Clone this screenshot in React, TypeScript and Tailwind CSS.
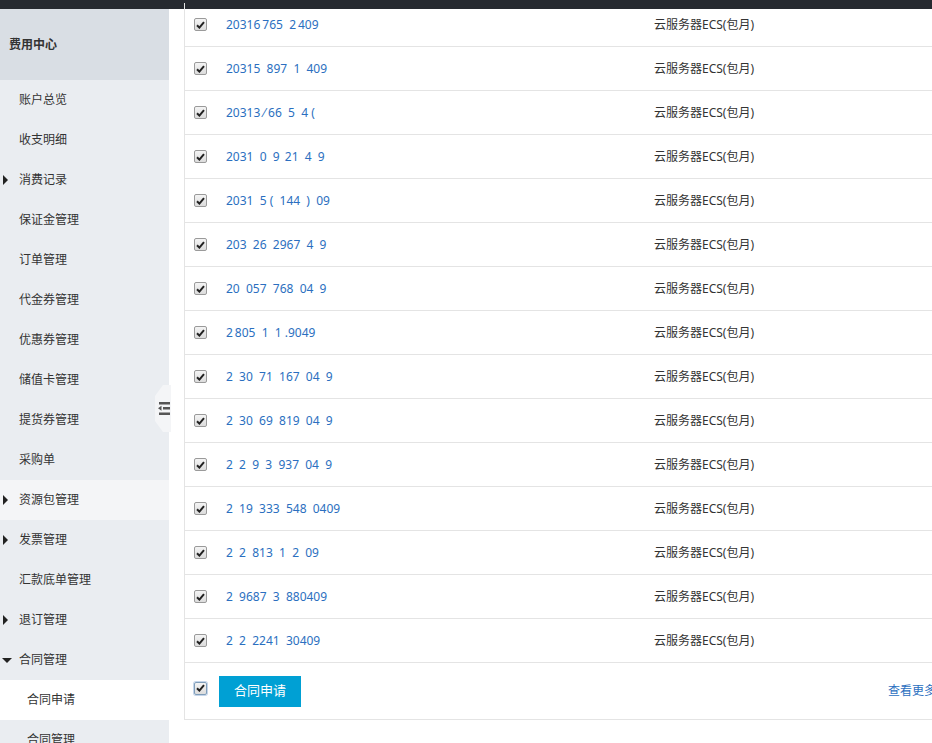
import React from "react";

const menu: { label: string; arrow?: "right" | "down"; active?: boolean; hover?: boolean; sub?: boolean }[] = [
  { label: "账户总览" },
  { label: "收支明细" },
  { label: "消费记录", arrow: "right" },
  { label: "保证金管理" },
  { label: "订单管理" },
  { label: "代金券管理" },
  { label: "优惠券管理" },
  { label: "储值卡管理" },
  { label: "提货券管理" },
  { label: "采购单" },
  { label: "资源包管理", arrow: "right", hover: true },
  { label: "发票管理", arrow: "right" },
  { label: "汇款底单管理" },
  { label: "退订管理", arrow: "right" },
  { label: "合同管理", arrow: "down" },
  { label: "合同申请", sub: true, active: true },
  { label: "合同管理", sub: true },
];

// order ids are partly masked in the source, keep gaps as spaces
const orders = [
  "20316\u2009765  2\u2009409",
  "20315  897  1  409",
  "20313 \u2044 66  5  4 (",
  "2031  0  9\u2009 21  4  9",
  "2031  5 (  144  )  09",
  "203  26  2967  4  9",
  "20  057  768  04  9",
  "2\u2009805  1  1 .9049",
  "2  30  71  167  04  9",
  "2  30  69  819  04  9",
  "2  2  9  3  937  04  9",
  "2  19  333  548  0409",
  "2  2  813  1  2  09",
  "2  9687  3  880409",
  "2  2  2241  30409",
];

const Check = ({ focus }: { focus?: boolean }) => (
  <span
    className={`flex h-[13px] w-[13px] items-center justify-center rounded-[2px] border bg-gradient-to-b from-[#f4f4f4] to-[#dcdcdc] ${
      focus ? "border-[#7f9db9] ring-1 ring-[#c5d5ea]" : "border-[#9a9a9a]"
    }`}
  >
    <svg width="9" height="8" viewBox="0 0 9 8">
      <path d="M1 4.2 L3.4 6.6 L8 1.2" fill="none" stroke="#222" strokeWidth="2" />
    </svg>
  </span>
);

export default function App() {
  return (
    <div
      className="h-[743px] w-[932px] overflow-hidden bg-white text-[12px] text-[#333]"
      style={{ fontFamily: '"Noto Sans", "Noto Sans CJK SC", sans-serif' }}
    >
      <div className="h-[9px] bg-[#262a30]" />
      <div className="relative flex">
        {/* sidebar */}
        <aside className="w-[169px] shrink-0 bg-[#eaedf1]">
          <div className="flex h-[71px] items-center bg-[#d9dee4] pl-[9px] font-bold text-[#333]">
            费用中心
          </div>
          {menu.map((m, i) => (
            <div
              key={i}
              className={`relative flex h-[40px] items-center ${m.sub ? "pl-[27px]" : "pl-[19px]"} ${
                m.active ? "bg-white" : m.hover ? "bg-[#f4f5f7]" : ""
              }`}
            >
              {m.arrow === "right" && (
                <span className="absolute left-[3px] top-[15px] h-0 w-0 border-y-[5px] border-l-[5px] border-y-transparent border-l-[#222]" />
              )}
              {m.arrow === "down" && (
                <span className="absolute left-[2px] top-[18px] h-0 w-0 border-x-[5px] border-t-[5px] border-x-transparent border-t-[#222]" />
              )}
              {m.label}
            </div>
          ))}
        </aside>

        {/* collapse handle */}
        <div className="absolute left-[155px] top-[376px] h-[47px] w-[16px]">
          <svg width="16" height="47" viewBox="0 0 16 47" className="absolute inset-0">
            <path d="M16 0 L16 47 L8 47 L0 36 L0 11 L8 0 Z" fill="#f4f5f7" />
          </svg>
          <svg width="12" height="13" viewBox="0 0 12 13" className="absolute left-[3px] top-[17px]">
            <rect x="1" y="0" width="11" height="2.5" fill="#555" />
            <rect x="5" y="5" width="7" height="2.5" fill="#555" />
            <path d="M0 6.25 L3.5 3.8 L3.5 8.7 Z" fill="#555" />
            <rect x="1" y="10.5" width="11" height="2.5" fill="#555" />
          </svg>
        </div>

        {/* main */}
        <main className="flex-1 pl-[15px]">
          <div className="mt-[-6px] w-[780px] border-b border-l border-[#e4e4e4]">
            {orders.map((o, i) => (
              <div key={i} className="flex h-[44px] items-center border-b border-[#e4e4e4] pl-[9px]">
                <Check />
                <span className="ml-[19px] w-[428px] whitespace-pre text-[#2b6fc0]">{o}</span>
                <span>云服务器ECS(包月)</span>
              </div>
            ))}
            <div className="flex h-[56px] items-center pl-[9px]">
              <span className="-mt-[6px]">
                <Check focus />
              </span>
              <button className="ml-[12px] h-[31px] w-[82px] bg-[#00a0d4] text-[13px] text-white">
                合同申请
              </button>
              <span className="ml-auto mr-[28px] whitespace-nowrap text-[#2b6fc0]">查看更多</span>
            </div>
          </div>
        </main>
      </div>
    </div>
  );
}
